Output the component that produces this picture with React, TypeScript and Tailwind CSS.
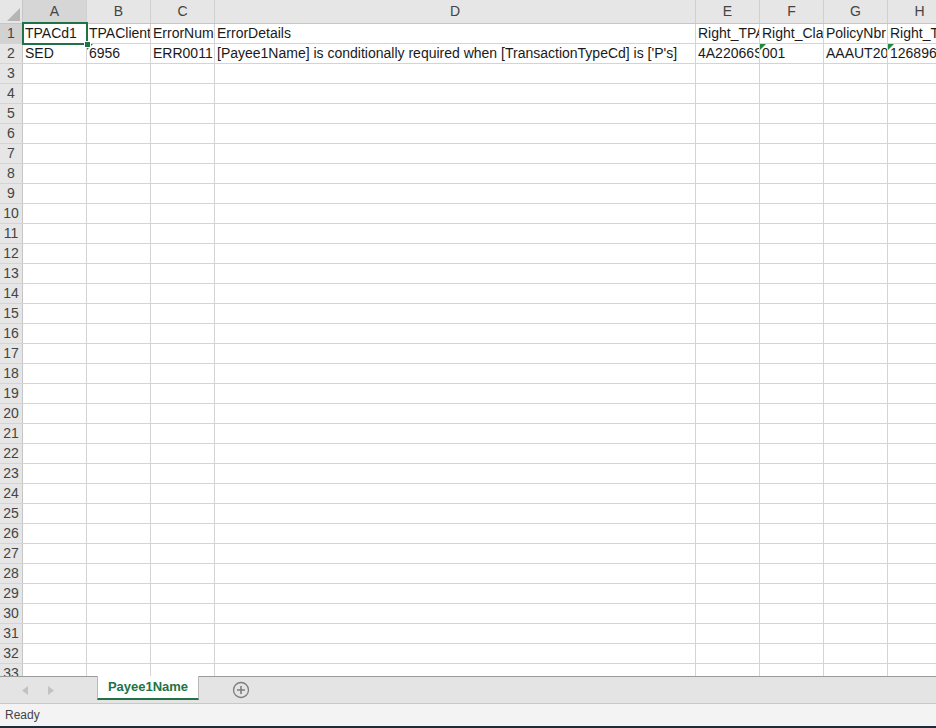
import React from "react"

const cols = [
  { name: "A", w: "w-[64px]" },
  { name: "B", w: "w-[64px]" },
  { name: "C", w: "w-[64px]" },
  { name: "D", w: "w-[481px]" },
  { name: "E", w: "w-[64px]" },
  { name: "F", w: "w-[64px]" },
  { name: "G", w: "w-[64px]" },
  { name: "H", w: "w-[64px]" },
]

const data: string[][] = [
  ["TPACd1", "TPAClient", "ErrorNum", "ErrorDetails", "Right_TPA", "Right_Clai", "PolicyNbr", "Right_T"],
  ["SED", "6956", "ERR0011", "[Payee1Name] is conditionally required when [TransactionTypeCd] is ['P's]", "4A22066S", "001", "AAAUT20", "126896"],
]

// cells that show the green "number stored as text" flag
const flagged = ["1-1", "1-5", "1-7"]

const font = { fontFamily: '"Liberation Sans", Arial, sans-serif' }

const App = () => {
  const rows = Array.from({ length: 33 }, (_, i) => i)

  return (
    <div className="flex flex-col h-[728px] w-[936px] overflow-hidden bg-white text-[#1a1a1a]" style={font}>
      {/* Grid */}
      <div className="flex-1 overflow-hidden">
        {/* column header */}
        <div className="flex h-[24px] bg-[#e6e6e6] border-b border-[#c6c6c6]">
          <div className="w-[23px] shrink-0 border-r border-[#c6c6c6] relative">
            <svg className="absolute left-[7px] top-[8px]" width="13" height="13" viewBox="0 0 13 13">
              <polygon points="13,0 13,13 0,13" fill="#b5b5b5" />
            </svg>
          </div>
          {cols.map((c, i) => (
            <div
              key={c.name}
              className={`${c.w} shrink-0 flex items-center justify-center text-[14px] text-[#444] border-r border-[#d0d0d0] ${i === 0 ? "bg-[#d6d6d6]" : ""}`}
            >
              {c.name}
            </div>
          ))}
        </div>

        {rows.map((r) => (
          <div key={r} className="flex h-[20px] border-b border-[#d4d4d4]">
            <div
              className={`w-[23px] shrink-0 flex items-center justify-center text-[14px] text-[#444] border-r border-[#c6c6c6] ${r === 0 ? "bg-[#d2d2d2]" : "bg-[#e6e6e6]"}`}
            >
              {r + 1}
            </div>
            {cols.map((c, ci) => {
              const text = data[r]?.[ci] ?? ""
              const isSel = r === 0 && ci === 0
              return (
                <div
                  key={c.name}
                  className={`${c.w} shrink-0 relative border-r border-[#d4d4d4] text-[14px] leading-[19px] whitespace-nowrap ${isSel ? "" : "overflow-hidden"}`}
                >
                  <div className="px-[2px] overflow-hidden">{text}</div>
                  {flagged.includes(`${r}-${ci}`) && (
                    <svg className="absolute left-0 top-0" width="6" height="6" viewBox="0 0 6 6">
                      <polygon points="0,0 6,0 0,6" fill="#1e8a3c" />
                    </svg>
                  )}
                  {isSel && (
                    <>
                      <div className="absolute left-[-1px] top-[-2px] right-[-2px] bottom-[-2px] border-2 border-[#217346] pointer-events-none" />
                      <div className="absolute right-[-5px] bottom-[-5px] w-[7px] h-[7px] bg-[#217346] border border-white z-10" />
                    </>
                  )}
                </div>
              )
            })}
          </div>
        ))}
      </div>

      {/* Sheet tabs */}
      <div className="h-[28px] shrink-0 flex items-start bg-[#e4e4e4] border-t border-[#9a9a9a] border-b border-b-[#c8c8c8]">
        <div className="w-[97px] h-full flex items-center gap-[20px] pl-[22px]">
          <svg width="6" height="9" viewBox="0 0 6 9">
            <polygon points="6,0 6,9 0,4.5" fill="#c2c2c2" />
          </svg>
          <svg width="6" height="9" viewBox="0 0 6 9">
            <polygon points="0,0 0,9 6,4.5" fill="#c2c2c2" />
          </svg>
        </div>
        <div className="w-[102px] h-[24px] -mt-px bg-white border-x border-[#b8b8b8] border-b-2 border-b-[#217346] flex items-center justify-center text-[13px] font-bold text-[#217346]">
          Payee1Name
        </div>
        <div className="w-[84px] h-full flex items-center justify-center">
          <svg width="18" height="18" viewBox="0 0 18 18">
            <circle cx="9" cy="9" r="7.5" fill="none" stroke="#7d7d7d" strokeWidth="1.3" />
            <path d="M9 5v8M5 9h8" stroke="#7d7d7d" strokeWidth="1.6" />
          </svg>
        </div>
      </div>

      {/* Status bar */}
      <div className="h-[22px] shrink-0 bg-[#f3f3f3] flex items-center pl-[5px] text-[12px] text-[#444]">
        Ready
      </div>
      <div className="h-[2px] shrink-0 bg-[#1f2a36]" />
    </div>
  )
}

export default App
